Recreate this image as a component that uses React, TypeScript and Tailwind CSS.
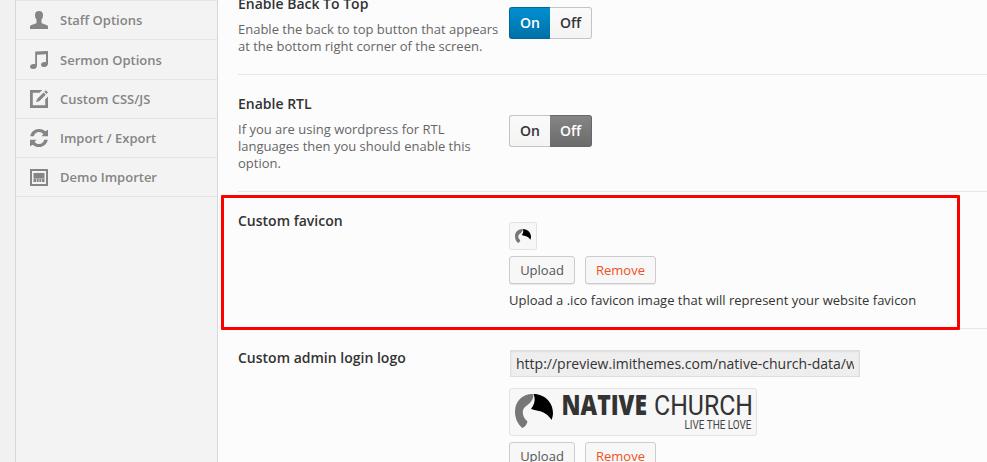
import React from "react";

const UserIcon = () => (
  <svg width="18" height="18" viewBox="0 0 18 18" fill="#858585">
    <path d="M9 0C6.300 0 5 1.600 5 4c0 2.200.6 3.500 1.500 4.600v2.600C6.500 12 6 12.300 5 12.700L1.500 14C.5 14.400 0 15 0 16v2h18v-2c0-1-.5-1.600-1.500-2L13 12.700c-1-.4-1.500-.7-1.500-1.500V8.600C12.400 7.500 13 6.200 13 4c0-2.400-1.300-4-4-4z" />
  </svg>
);

const MusicIcon = () => (
  <svg width="18" height="18" viewBox="0 0 18 18" fill="#858585">
    <path d="M5.200.6 18 0v12.600c0 2-1.500 3.400-3.700 3.400-1.900 0-3.300-.9-3.300-2.300 0-1.600 1.700-2.700 3.500-2.700.6 0 1.100.1 1.500.3V3.300L7 3.800v10.600C7 16.600 5.400 18 3.200 18 1.300 18 0 17 0 15.700c0-1.500 1.600-2.700 3.400-2.700.7 0 1.300.1 1.800.3z" />
  </svg>
);

const EditIcon = () => (
  <svg width="18" height="18" viewBox="0 0 18 18" fill="#858585">
    <path d="M0 0h12.200L9.600 2.800H2.800v12.400h12.400V9.200L18 6.500V18H0z" />
    <path d="M15.800 .3 18 2.500l-1.500 1.500-2.200-2.200zM13.600 2.500l2.200 2.200-6.300 6.200-3.500 1.300 1.300-3.500z" />
  </svg>
);

const RefreshIcon = () => (
  <svg width="18" height="18" viewBox="0 0 18 18" fill="#858585">
    <path d="M.2 7.300C1.100 3 4.500 0 9 0c2.500 0 4.500.8 6.100 2.300L18 .8v6.400h-6.600l2-2C12.300 3.700 10.800 2.900 9 2.900c-2.600 0-4.500 1.700-5.200 4.400z" />
    <path d="M17.800 10.700C16.900 15 13.500 18 9 18c-2.500 0-4.500-.8-6.100-2.300L0 17.200v-6.400h6.600l-2 2c1.100 1.500 2.600 2.300 4.400 2.300 2.600 0 4.500-1.700 5.200-4.400z" />
  </svg>
);

const ImporterIcon = () => (
  <svg width="18" height="17" viewBox="0 0 18 17" fill="#858585">
    <path fillRule="evenodd" d="M0 0h18v17H0zM2 2v13h14V2z" />
    <path d="M3.500 4h11v5.500h-11zM3.500 10h2.800v3H3.500zM7 10h1.700v3H7zM9.400 10h1.700v3H9.400zM11.800 10h2.700v3h-2.700z" />
    <path opacity=".55" d="M3.500 9.500h11v.5h-11z" />
  </svg>
);

const items = [
  { label: "Staff Options", icon: <UserIcon />, row: "h-[39px]" },
  { label: "Sermon Options", icon: <MusicIcon />, row: "h-10" },
  { label: "Custom CSS/JS", icon: <EditIcon />, row: "h-[39px]" },
  { label: "Import / Export", icon: <RefreshIcon />, row: "h-[39px]" },
  { label: "Demo Importer", icon: <ImporterIcon />, row: "h-[39px]" },
];

const Mark = ({ width, height }: { width: number; height: number }) => (
  <svg width={width} height={height} viewBox="0 0 38 34" preserveAspectRatio="none">
    <path fill="#777" d="M17 0C8 0 0 7 0 17.500 0 24 2.500 30 7.500 34c2-.8 4.300-3.200 5-6.500-3-2.800-4.700-5.500-4.700-9C7.800 13 12 12 15.300 8.500 17.500 6 19 3 18 .3z" />
    <path fill="#000" d="M18.500 0C28 0 38 7 38 19c0 2.500-.6 5-1.600 7-2.300-4.500-7-7.700-12.400-9-3.300-.8-6-1-8-2.200C19.500 11 20.800 5 18.500 0z" />
  </svg>
);

function Toggle({ on }: { on: boolean }) {
  return (
    <div className="flex h-8 w-[83px] text-[14px] leading-[30px] font-semibold text-[#333]">
      <div
        className={
          on
            ? "w-[41px] rounded-l-[3px] border border-r-0 border-[#0a6493] bg-linear-to-b from-[#0090d2] to-[#0071a8] text-center text-white"
            : "w-[41px] rounded-l-[3px] border border-r-0 border-[#c4c4c4] bg-linear-to-b from-[#fafafa] to-[#f4f4f4] text-center"
        }
      >
        On
      </div>
      <div
        className={
          on
            ? "w-[42px] rounded-r-[3px] border border-l-0 border-[#c4c4c4] bg-linear-to-b from-[#fafafa] to-[#f4f4f4] text-center"
            : "w-[42px] rounded-r-[3px] border border-l-0 border-[#666] bg-linear-to-b from-[#858585] to-[#6b6b6b] text-center text-white"
        }
      >
        Off
      </div>
    </div>
  );
}

function Buttons() {
  return (
    <div className="flex gap-[10px] text-[13px] leading-[26px]">
      <button className="h-7 w-[66px] rounded-[3px] border border-[#ccc] bg-[#f7f7f7] text-[#555] shadow-[0_1px_0_rgba(0,0,0,0.08)]">
        Upload
      </button>
      <button className="h-7 w-[71px] rounded-[3px] border border-[#ccc] bg-[#f7f7f7] text-[#ef521d] shadow-[0_1px_0_rgba(0,0,0,0.08)]">
        Remove
      </button>
    </div>
  );
}

function Label({ title, children }: { title: string; children?: React.ReactNode }) {
  return (
    <div className="w-[271px] shrink-0">
      <h3 className="text-[14px] leading-[18px] font-semibold whitespace-nowrap text-[#333]">{title}</h3>
      {children && <p className="mt-2 text-[13px] leading-[17px] whitespace-nowrap text-[#666]">{children}</p>}
    </div>
  );
}

export default function App() {
  return (
    <div className="relative flex h-[462px] w-[987px] overflow-hidden bg-[#fcfcfc] font-['Open_Sans',sans-serif]">
      <div className="w-[15px] shrink-0 bg-[#f1f1f1]" />
      <nav className="w-[203px] shrink-0 border-x border-[#d8d8d8] bg-[#f3f3f3]">
        <div className="h-px bg-[#e5e5e5]" />
        {items.map((item) => (
          <div key={item.label} className={`flex items-center border-b border-[#e5e5e5] pl-[14px] ${item.row}`}>
            <span className="flex w-[30px] shrink-0">{item.icon}</span>
            <span className="text-[13px] leading-[18px] font-semibold text-[#858585]">{item.label}</span>
          </div>
        ))}
      </nav>

      <main className="flex-1 pl-5">
        <section className="flex h-[75px] border-b border-[#e7e7e7]">
          <div className="-mt-[5px]">
            <Label title="Enable Back To Top">
              Enable the back to top button that appears
              <br />
              at the bottom right corner of the screen.
            </Label>
          </div>
          <div className="pt-[7px]">
            <Toggle on />
          </div>
        </section>

        <section className="flex h-[117px] border-b border-[#e7e7e7] pt-5">
          <Label title="Enable RTL">
            If you are using wordpress for RTL
            <br />
            languages then you should enable this
            <br />
            option.
          </Label>
          <div className="pt-5">
            <Toggle on={false} />
          </div>
        </section>

        <section className="flex h-[137px] border-b border-[#e7e7e7] pt-5">
          <Label title="Custom favicon" />
          <div className="pt-[10px]">
            <div className="mb-[6px] flex h-7 w-7 items-start rounded-[2px] border border-[#e3e3e3] bg-[#f7f7f7] pt-[6px] pl-[5px]">
              <Mark width={16} height={14} />
            </div>
            <Buttons />
            <p className="mt-[7px] text-[13px] leading-[18px] whitespace-nowrap text-[#333]">
              Upload a .ico favicon image that will represent your website favicon
            </p>
          </div>
        </section>

        <section className="flex pt-5">
          <Label title="Custom admin login logo" />
          <div>
            <div className="mt-px ml-px h-[27px] w-[350px] border border-[#ddd] bg-[#eee] px-[5px] shadow-[inset_0_1px_2px_rgba(0,0,0,0.07)]">
              <div className="overflow-hidden text-[14px] leading-[25px] whitespace-nowrap text-[#333]">
                http://preview.imithemes.com/native-church-data/w
              </div>
            </div>
            <div className="mt-[11px] mb-[6px] flex h-12 w-[248px] rounded-[3px] border border-[#e3e3e3] bg-[#f7f7f7] pt-[5px] pl-[5px]">
              <Mark width={38} height={34} />
              <svg className="-mt-[5px] overflow-visible" width="200" height="46" viewBox="0 0 200 46" fontFamily="'Open Sans', sans-serif" fill="#333">
                <text x="8.500" y="25.700" fontSize="27.500" fontWeight="800" textLength="85.500" lengthAdjust="spacingAndGlyphs">
                  NATIVE
                </text>
                <text x="101" y="25.700" fontSize="27.500" fontWeight="400" fontFamily="Roboto, sans-serif" textLength="99" lengthAdjust="spacingAndGlyphs">
                  CHURCH
                </text>
                <text x="131.500" y="40.300" fontSize="12" fontWeight="400" fontFamily="Roboto, sans-serif" fill="#444" textLength="67" lengthAdjust="spacingAndGlyphs">
                  LIVE THE LOVE
                </text>
              </svg>
            </div>
            <Buttons />
          </div>
        </section>
      </main>

      {/* Highlight drawn over the favicon row */}
      <div className="pointer-events-none absolute top-[195px] left-[221px] h-[135px] w-[739px] rounded-[1px] border-3 border-[#f00]" />
    </div>
  );
}
